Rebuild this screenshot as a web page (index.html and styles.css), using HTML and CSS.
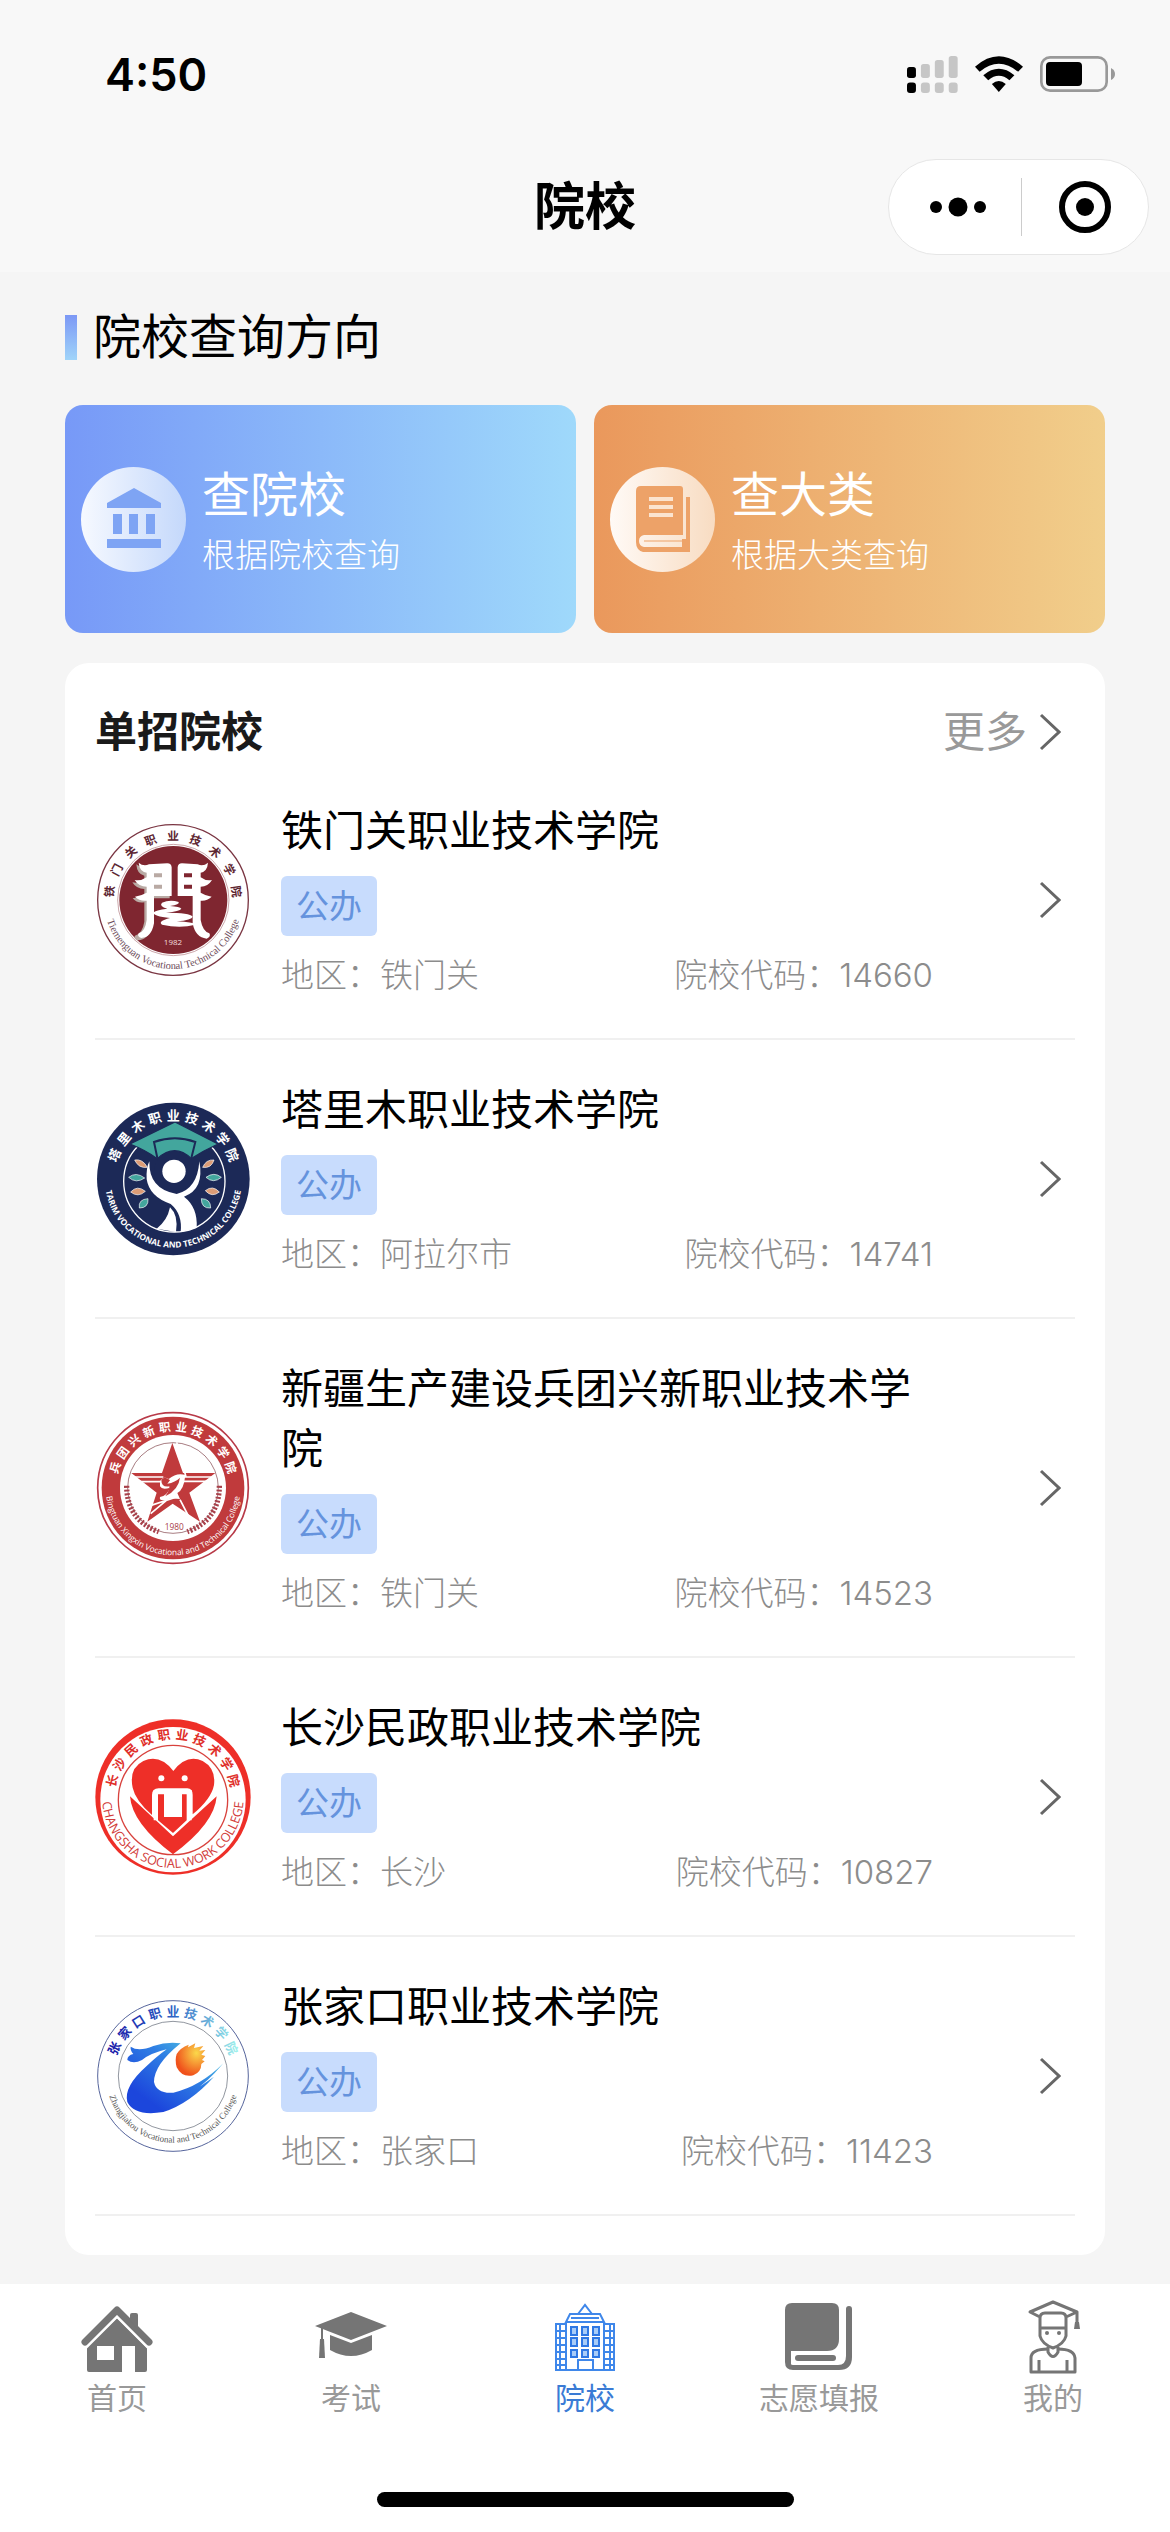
FILE: index.html
```html
<!DOCTYPE html>
<html lang="zh-CN">
	<head>
		<meta charset="utf-8">
		<meta name="viewport" content="width=device-width, initial-scale=1">
		<title>院校</title>
		<link rel="stylesheet" href="styles.css">
	</head>
	<body>
		<header class="header">
			<div class="status">
				<span class="time">4:50</span>
				<div class="status-icons">
					<svg width="51" height="37" viewBox="81 78 154 111">
						<g fill="#c6c6c6">
							<rect x="123" y="102" width="27" height="42" rx="8"/>
							<rect x="165" y="90" width="27" height="54" rx="8"/>
							<rect x="207" y="78" width="27" height="66" rx="8"/>
							<rect x="123" y="158" width="27" height="31" rx="9"/>
							<rect x="165" y="158" width="27" height="31" rx="9"/>
							<rect x="207" y="158" width="27" height="31" rx="9"/>
						</g>
						<rect x="81" y="111" width="27" height="33" rx="8"/>
						<rect x="81" y="158" width="27" height="31" rx="9"/>
					</svg>
					<svg width="48" height="36" viewBox="285 75 145 108">
						<path d="M285 107Q357 44 430 107L415 122Q357 74 299 122Z"/>
						<path d="M310 133Q357 94 404 133L389 148Q357 121 325 148Z"/>
						<path d="M336 159Q357 142 378 159L357 183Z"/>
					</svg>
					<svg width="75" height="36" viewBox="480 78 225 108">
						<rect x="484" y="82" width="196" height="100" rx="26" fill="none" stroke="#999" stroke-width="8"/>
						<rect x="498" y="96" width="108" height="72" rx="12"/>
						<path d="M693 114Q705 120 705 132T693 150Z" fill="#999"/>
					</svg>
				</div>
			</div>
			<div class="nav">
				<h1 class="nav-title">院校</h1>
				<div class="capsule">
					<button class="capsule-btn" type="button" aria-label="更多操作">
						<svg width="56" height="20" viewBox="0 0 56 20">
							<circle cx="6" cy="10" r="6"/>
							<circle cx="28" cy="10" r="9.5"/>
							<circle cx="50" cy="10" r="6"/>
						</svg>
					</button>
					<button class="capsule-btn" type="button" aria-label="关闭">
						<svg width="52" height="52" viewBox="0 0 52 52">
							<circle cx="26" cy="26" r="23" fill="none" stroke="#000" stroke-width="6"/>
							<circle cx="26" cy="26" r="9"/>
						</svg>
					</button>
				</div>
			</div>
		</header>

		<main class="main">
			<h2 class="heading">院校查询方向</h2>
			<div class="entries">
				<a class="entry entry-school" href="#">
					<span class="entry-icon">
						<svg width="54" height="62" viewBox="0 0 54 62">
							<path fill="#7ea4f4" d="M27 0L54 15V20H0V15ZM6 26H15V46H6ZM22 26H31V46H22ZM39 26H48V46H39ZM0 51H54V60H0Z"/>
						</svg>
					</span>
					<span class="entry-text">
						<span class="entry-name">查院校</span>
						<span class="entry-desc">根据院校查询</span>
					</span>
				</a>
				<a class="entry entry-major" href="#">
					<span class="entry-icon">
						<svg width="54" height="68" viewBox="0 0 54 68">
							<path fill="#eda268" d="M5 1H44Q47 1 47 4V50H8Q3 51 3 56T8 62H46V54H50V12H54V67H7Q0 65 0 57V6Q0 1 5 1Z"/>
							<path stroke="#fbe4d0" stroke-width="4" d="M13 14H37M13 22H37M13 30H37"/>
							<path stroke="#eda268" stroke-width="1" d="M8 56H46"/>
						</svg>
					</span>
					<span class="entry-text">
						<span class="entry-name">查大类</span>
						<span class="entry-desc">根据大类查询</span>
					</span>
				</a>
			</div>

			<section class="panel">
				<div class="panel-head">
					<h2 class="panel-title">单招院校</h2>
					<a class="more" href="#">更多
						<svg class="arrow" width="22" height="38" viewBox="0 0 22 38"><path d="M2 2L20 19L2 36"/></svg>
					</a>
				</div>
				<ul class="schools">
					<li>
						<a class="school" href="#">
							<svg class="logo" viewBox="45 66 468 468">
								<path id="a1" fill="none" d="M279 479A179 179 0 0 1 279 121A179 179 0 0 1 279 479"/>
								<path id="a2" fill="none" d="M279 93A207 207 0 0 0 279 507A207 207 0 0 0 279 93"/>
								<circle cx="279" cy="300" r="226" fill="#fff" stroke="#7a3542" stroke-width="4"/>
								<circle cx="280" cy="300" r="167" fill="none" stroke="#b07a80" stroke-width="2"/>
								<circle cx="280" cy="300" r="162" fill="#7f2630"/>
								<text class="brush" font-size="35" fill="#5d2632"><textPath href="#a1" startOffset="50%">铁&ensp;&emsp13;门&ensp;&emsp13;关&ensp;&emsp13;职&ensp;&emsp13;业&ensp;&emsp13;技&ensp;&emsp13;术&ensp;&emsp13;学&ensp;&emsp13;院</textPath></text>
								<text class="serif" font-size="31" fill="#6c4a58"><textPath href="#a2" startOffset="50%">Tiemenguan Vocational Technical College</textPath></text>
								<g fill="#b9aaa4" transform="translate(-5 5)">
									<path d="M174 188Q190 202 207 195L262 190Q272 190 274 200V290H220V370Q212 415 178 416Q164 410 170 402Q192 396 198 360V302Q176 306 163 290Q180 290 198 280V262Q174 262 162 242Q180 246 198 236V222Q176 218 174 188Z"/>
								</g>
								<path fill="#fff" fill-rule="evenodd" d="M176 188Q190 200 207 193L262 190Q274 190 275 202V288H222V370Q214 413 184 414Q170 410 176 400Q196 394 200 360V302Q178 304 165 290Q182 288 200 278V260Q176 260 164 240Q182 244 200 232V218Q178 214 176 188ZM222 220V232H246V220ZM222 254V266H246V254Z"/>
								<path fill="#fff" fill-rule="evenodd" d="M384 188Q370 200 353 193L306 190Q294 190 293 202V288H338V370Q346 413 380 416Q394 410 388 400Q368 394 362 360V302Q380 304 395 290Q378 288 362 278V260Q384 260 396 240Q378 244 362 232V218Q382 214 384 188ZM312 220V232H336V220ZM312 254V266H336V254Z"/>
								<path fill="#fff" d="M246 308Q270 298 296 306Q300 314 270 318Q300 320 304 326Q300 334 258 338Q330 338 338 350Q336 360 290 364Q340 366 346 374Q300 386 246 374Q232 364 270 354Q220 348 220 338Q226 330 262 326Q236 318 246 308Z"/>
								<text class="sans" x="279" y="436" font-size="24" fill="#f3dede">1982</text>
							</svg>
							<div class="info">
								<h3 class="name">铁门关职业技术学院</h3>
								<span class="tag">公办</span>
								<div class="meta"><span>地区：铁门关</span><span>院校代码：14660</span></div>
							</div>
							<svg class="arrow" width="22" height="38" viewBox="0 0 22 38"><path d="M2 2L20 19L2 36"/></svg>
						</a>
					</li>
					<li>
						<a class="school" href="#">
							<svg class="logo" viewBox="45 65 468 468">
								<path id="b1" fill="none" d="M280 475A176 176 0 0 1 280 123A176 176 0 0 1 280 475"/>
								<path id="b2" fill="none" d="M280 93A206 206 0 0 0 280 505A206 206 0 0 0 280 93"/>
								<circle cx="280" cy="299" r="229" fill="#1c2957"/>
								<circle cx="283" cy="306" r="152" fill="none" stroke="#fff" stroke-width="4"/>
								<path fill="#43a69d" stroke="#1c2957" stroke-width="4" d="M285 128L414 194Q370 214 334 238Q285 190 232 238Q196 212 150 194Z"/>
								<path fill="none" stroke="#1c2957" stroke-width="6" d="M232 236L222 188Q285 166 346 188L334 236"/>
								<circle cx="282" cy="276" r="60" fill="#1c2957"/>
								<circle cx="282" cy="276" r="35" fill="#fff"/>
								<path fill="#fff" d="M208 246Q206 330 290 344Q352 330 358 246Q374 330 312 352Q354 384 350 446L302 458Q308 404 272 374Q208 352 200 300Q198 266 208 246Z"/>
								<path fill="#fff" d="M270 384Q296 408 288 458L230 448Q262 424 270 384Z"/>
								<g fill="#dc9c76" stroke="#fff" stroke-width="2">
									<path d="M164 242Q188 238 202 264Q176 268 164 242Z"/>
									<path d="M152 338Q172 316 196 336Q174 356 152 338Z"/>
									<path d="M368 264Q378 240 402 242Q394 268 368 264Z"/>
									<path d="M376 334Q398 316 418 338Q396 356 376 334Z"/>
								</g>
								<g fill="#43a69d" stroke="#fff" stroke-width="2">
									<path d="M146 294Q168 276 194 296Q168 314 146 294Z"/>
									<path d="M178 386Q174 360 204 358Q206 386 178 386Z"/>
									<path d="M378 294Q402 276 424 294Q400 314 378 294Z"/>
									<path d="M364 358Q392 358 392 386Q364 388 364 358Z"/>
								</g>
								<text class="brush" font-size="39" fill="#fff"><textPath href="#b1" startOffset="50%">塔&emsp13;里&emsp13;木&emsp13;职&emsp13;业&emsp13;技&emsp13;术&emsp13;学&emsp13;院</textPath></text>
								<text class="sans" font-size="25" font-weight="700" fill="#fff"><textPath href="#b2" startOffset="50%">TARIM VOCATIONAL AND TECHNICAL COLLEGE</textPath></text>
							</svg>
							<div class="info">
								<h3 class="name">塔里木职业技术学院</h3>
								<span class="tag">公办</span>
								<div class="meta"><span>地区：阿拉尔市</span><span>院校代码：14741</span></div>
							</div>
							<svg class="arrow" width="22" height="38" viewBox="0 0 22 38"><path d="M2 2L20 19L2 36"/></svg>
						</a>
					</li>
					<li>
						<a class="school" href="#">
							<svg class="logo" viewBox="45 61 468 468">
								<path id="c1" fill="none" d="M279 466A171 171 0 0 1 279 124A171 171 0 0 1 279 466"/>
								<path id="c2" fill="none" d="M279 93A202 202 0 0 0 279 497A202 202 0 0 0 279 93"/>
								<circle cx="279" cy="295" r="226" fill="#fff" stroke="#b83a48" stroke-width="5"/>
								<circle cx="279" cy="295" r="214" fill="#c03a3c"/>
								<circle cx="279" cy="295" r="159" fill="#fff"/>
								<circle cx="279" cy="295" r="136" fill="none" stroke="#7c3b42" stroke-width="2"/>
								<path fill="#c03a3c" d="M277 160L309 250H406L328 309L360 396L278 342L202 396L230 309L154 250H246Z"/>
								<path stroke="#fff" stroke-width="5" fill="none" d="M290 158L318 262M300 262H400M302 275H380M156 262H250M176 276H250M212 372L262 330M204 350L290 322M300 330L330 388"/>
								<path fill="#fff" d="M240 275Q250 258 266 268Q290 248 316 256Q312 300 292 310L300 328Q272 324 262 330Q236 336 240 322Q262 318 270 294Q246 302 240 290Z"/>
								<path fill="#c03a3c" d="M244 270Q256 258 270 272L262 282Q286 278 300 264Q296 300 256 320Q270 300 268 290Q244 294 244 270Z"/>
								<g fill="none" stroke="#a8404a" stroke-width="16" stroke-dasharray="6 5">
									<path d="M140 288Q140 390 236 426"/>
									<path d="M418 288Q418 390 322 426"/>
								</g>
								<text class="sans" x="283" y="422" font-size="25" fill="#a8404a">1980</text>
								<text class="brush" font-size="35" fill="#fff"><textPath href="#c1" startOffset="50%">兵&emsp13;团&emsp13;兴&emsp13;新&emsp13;职&emsp13;业&emsp13;技&emsp13;术&emsp13;学&emsp13;院</textPath></text>
								<text class="sans" font-size="25" fill="#fff"><textPath href="#c2" startOffset="50%">Bingtuan Xingxin Vocational and Technical College</textPath></text>
							</svg>
							<div class="info">
								<h3 class="name">新疆生产建设兵团兴新职业技术学院</h3>
								<span class="tag">公办</span>
								<div class="meta"><span>地区：铁门关</span><span>院校代码：14523</span></div>
							</div>
							<svg class="arrow" width="22" height="38" viewBox="0 0 22 38"><path d="M2 2L20 19L2 36"/></svg>
						</a>
					</li>
					<li>
						<a class="school" href="#">
							<svg class="logo" viewBox="45 56 468 468">
								<path id="d1" fill="none" d="M279 466A175 175 0 0 1 279 116A175 175 0 0 1 279 466"/>
								<path id="d2" fill="none" d="M279 79A212 212 0 0 0 279 503A212 212 0 0 0 279 79"/>
								<circle cx="279" cy="290" r="233" fill="#ee2f28"/>
								<circle cx="279" cy="298" r="218" fill="#fff"/>
								<circle cx="279" cy="299" r="164" fill="none" stroke="#d8423d" stroke-width="4"/>
								<path fill="#ee2f28" d="M280 212Q240 160 190 182Q146 204 158 262Q166 300 216 344V284Q216 264 236 264H322Q338 264 338 284V342Q394 296 402 254Q408 204 368 182Q320 160 280 212Z"/>
								<path fill="#ee2f28" d="M150 288L279 408L410 288Q404 370 279 462Q156 370 150 288Z"/>
								<path fill="#ee2f28" d="M234 282H252V350H306V282H320V360L279 398L234 360Z"/>
								<path fill="none" stroke="#fff" stroke-width="10" d="M226 360V274H262V340H298V274H330V360"/>
								<circle cx="244" cy="234" r="9" fill="#fff"/>
								<circle cx="314" cy="234" r="9" fill="#fff"/>
								<text class="brush" font-size="38" fill="#e02f2a"><textPath href="#d1" startOffset="50%">长&emsp13;沙&emsp13;民&emsp13;政&emsp13;职&emsp13;业&emsp13;技&emsp13;术&emsp13;学&emsp13;院</textPath></text>
								<text class="sans" font-size="38" fill="#d23c3a"><textPath href="#d2" startOffset="50%">CHANGSHA SOCIAL WORK COLLEGE</textPath></text>
							</svg>
							<div class="info">
								<h3 class="name">长沙民政职业技术学院</h3>
								<span class="tag">公办</span>
								<div class="meta"><span>地区：长沙</span><span>院校代码：10827</span></div>
							</div>
							<svg class="arrow" width="22" height="38" viewBox="0 0 22 38"><path d="M2 2L20 19L2 36"/></svg>
						</a>
					</li>
					<li>
						<a class="school" href="#">
							<svg class="logo" viewBox="45 54 468 468">
								<defs>
									<linearGradient id="blue" x1="0" y1="1" x2="1" y2="0">
										<stop offset="0.2" stop-color="#1c46dc"/>
										<stop offset="0.6" stop-color="#2f7fe4"/>
										<stop offset="1" stop-color="#5ce0e0"/>
									</linearGradient>
									<linearGradient id="ring" gradientUnits="userSpaceOnUse" x1="90" y1="0" x2="470" y2="0">
										<stop offset="0" stop-color="#1a1aa8"/>
										<stop offset="0.5" stop-color="#2b62c4"/>
										<stop offset="1" stop-color="#9ef0ec"/>
									</linearGradient>
									<radialGradient id="sun" cx="0.7" cy="0.3" r="0.7">
										<stop offset="0" stop-color="#fbd84a"/>
										<stop offset="1" stop-color="#f0521c"/>
									</radialGradient>
								</defs>
								<path id="e1" fill="none" d="M279 468A180 180 0 0 1 279 108A180 180 0 0 1 279 468"/>
								<path id="e2" fill="none" d="M279 88A200 200 0 0 0 279 488A200 200 0 0 0 279 88"/>
								<circle cx="279" cy="288" r="226" fill="#fff" stroke="#56659c" stroke-width="3"/>
								<circle cx="279" cy="288" r="164" fill="none" stroke="#59606e" stroke-width="2"/>
								<path fill="url(#blue)" d="M152 200Q176 216 220 198Q262 184 302 190Q222 254 222 306Q230 342 280 338Q360 320 430 250Q380 310 336 336L402 290Q330 370 250 396Q164 410 142 366Q130 320 200 258Q232 228 260 208Q210 220 186 240Q160 254 142 240Q142 226 160 222Q150 210 152 200Z"/>
								<path fill="url(#sun)" d="M290 222Q300 204 326 194L324 202L346 190L342 204L370 198L358 212L376 210L364 224L376 228L366 240L374 244L364 252Q364 276 340 286Q306 294 290 262Q284 240 290 222Z"/>
								<text class="brush" font-size="38" fill="url(#ring)"><textPath href="#e1" startOffset="50%">张&emsp13;家&emsp13;口&emsp13;职&emsp13;业&emsp13;技&emsp13;术&emsp13;学&emsp13;院</textPath></text>
								<text class="serif" font-size="27" fill="#555"><textPath href="#e2" startOffset="50%">Zhangjiakou Vocational and Technical College</textPath></text>
							</svg>
							<div class="info">
								<h3 class="name">张家口职业技术学院</h3>
								<span class="tag">公办</span>
								<div class="meta"><span>地区：张家口</span><span>院校代码：11423</span></div>
							</div>
							<svg class="arrow" width="22" height="38" viewBox="0 0 22 38"><path d="M2 2L20 19L2 36"/></svg>
						</a>
					</li>
				</ul>
			</section>
		</main>

		<footer class="footer">
			<nav class="tabs">
				<a class="tab" href="#">
					<svg width="74" height="74" viewBox="0 0 74 74">
						<path fill="none" stroke="#757575" stroke-width="7" stroke-linecap="round" stroke-linejoin="round" d="M5 42L37 10L69 42"/>
						<path fill="#757575" d="M50 20V15Q50 13 52 13H56Q58 13 58 15V30Z"/>
						<path fill="#757575" fill-rule="evenodd" d="M37 18L67 48V70Q67 72 65 72H55V46H42V72H9Q7 72 7 70V47ZM17 46V60H34V46Z"/>
						<path fill="none" stroke="#fff" stroke-width="2" d="M6 48L37 17L68 48"/>
					</svg>
					<span>首页</span>
				</a>
				<a class="tab" href="#">
					<svg width="74" height="74" viewBox="0 0 74 74">
						<path fill="#757575" d="M37 12L73 26L37 40L1 26ZM16 35L37 43L58 35V50Q37 62 16 50Z"/>
						<path fill="none" stroke="#757575" stroke-width="2" d="M8 28V42"/>
						<path fill="#757575" d="M6 39H10L11 58H5Z"/>
					</svg>
					<span>考试</span>
				</a>
				<a class="tab tab-active" href="#">
					<svg width="74" height="74" viewBox="0 0 74 74">
						<g fill="none" stroke="#3f87ea" stroke-width="2">
							<path d="M7 70H67M30 14L37 5L44 14M22 14H52L56 22H18ZM23 18H51M18 22V70M56 22V70M8 70V24H18M56 24H66V70M30 70V60H45V70"/>
							<path d="M9 31H17M9 38H17M9 45H17M9 52H17M9 59H17M9 65H17M57 31H65M57 38H65M57 45H65M57 52H65M57 59H65M57 65H65M12 24V70M62 24V70"/>
						</g>
						<g fill="#a8ccf8" stroke="#2f78e4" stroke-width="2">
							<path d="M23 27H29V35H23ZM34 27H40V35H34ZM45 27H51V35H45ZM23 38H29V46H23ZM34 38H40V46H34ZM45 38H51V46H45ZM23 50H29V57H23ZM34 50H40V57H34ZM45 50H51V57H45Z"/>
						</g>
					</svg>
					<span>院校</span>
				</a>
				<a class="tab" href="#">
					<svg width="74" height="74" viewBox="0 0 74 74">
						<path fill="#757575" d="M10 3H50Q57 3 57 10V39Q57 51 45 51H9V64Q9 65 11 65H56Q64 65 64 56V9Q64 6 67 6T70 9V57Q70 70 57 70H11Q3 70 3 62V10Q3 3 10 3Z"/>
						<path stroke="#757575" stroke-width="6" stroke-linecap="round" d="M16 58H51"/>
					</svg>
					<span>志愿填报</span>
				</a>
				<a class="tab" href="#">
					<svg width="74" height="74" viewBox="0 0 74 74">
						<g fill="none" stroke="#757575" stroke-width="3" stroke-linejoin="round">
							<path d="M24 17L14 12L37 2L61 12L50 17M24 28V18Q24 13 29 13H45Q50 13 50 18V28ZM24 28V36Q26 44 37 48Q48 44 50 36V28M61 12V27M32 47V52Q37 61 42 52V47"/>
							<path d="M32 49Q15 49 15 58V72H59V58Q58 49 42 49M23 60V72M51 60V72"/>
						</g>
						<path fill="#757575" d="M59 22H63L64 29H58Z"/>
						<circle cx="31" cy="33" r="2" fill="#757575"/>
						<circle cx="43" cy="33" r="2" fill="#757575"/>
					</svg>
					<span>我的</span>
				</a>
			</nav>
			<div class="home-bar"></div>
		</footer>
	</body>
</html>
```
FILE: styles.css
```css
* {
	box-sizing: border-box;
}
body {
	margin: 0;
	min-height: 100vh;
	display: flex;
	flex-direction: column;
	background-color: #f5f5f5;
	color: #000;
	font-family: Inter, "Noto Sans CJK SC", sans-serif;
}
h1, h2, h3, ul {
	margin: 0;
	padding: 0;
	font-weight: 400;
}
ul {
	list-style: none;
}
a {
	color: inherit;
	text-decoration: none;
}
svg {
	display: block;
	flex: none;
}

/* status bar and title */
.header {
	background-color: #f8f8f8;
	padding-bottom: 6px;
}
.status {
	height: 148px;
	padding: 0 55px 0 105px;
	display: flex;
	align-items: center;
	justify-content: space-between;
}
.time {
	font-size: 45px;
	font-weight: 600;
}
.status-icons {
	display: flex;
	gap: 17px;
}
.nav {
	height: 118px;
	padding: 0 21px;
	display: grid;
	grid-template-columns: 1fr auto 1fr;
	align-items: center;
}
.nav-title {
	grid-column: 2;
	font-size: 51px;
	font-weight: 600;
	line-height: 60px;
}
.capsule {
	justify-self: end;
	width: 261px;
	height: 96px;
	display: flex;
	align-items: center;
	background-color: #fff;
	border: 1px solid #e6e6e6;
	border-radius: 48px;
}
.capsule-btn {
	flex: 1;
	height: 58px;
	padding: 0 0 0 6px;
	display: flex;
	align-items: center;
	justify-content: center;
	background: none;
	border: 0;
}
.capsule-btn + .capsule-btn {
	padding: 0;
	border-left: 1px solid #ccc;
}

/* query entries */
.main {
	padding: 32px 65px 29px;
}
.heading {
	display: flex;
	align-items: center;
	gap: 16px;
	font-size: 48px;
	line-height: 66px;
}
.heading::before {
	content: "";
	width: 12px;
	height: 45px;
	background: linear-gradient(#7c98f5, #a0d4f9);
}
.entries {
	display: grid;
	grid-template-columns: 1fr 1fr;
	gap: 18px;
	margin: 35px 0 30px;
}
.entry {
	height: 228px;
	padding: 0 16px;
	display: flex;
	align-items: center;
	gap: 16px;
	border-radius: 18px;
	color: #fff;
}
.entry-school {
	background: linear-gradient(to right, #7799f7, #9fd9fb);
}
.entry-major {
	background: linear-gradient(to right, #ea985c, #f1ce8b);
}
.entry-icon {
	width: 105px;
	height: 105px;
	display: flex;
	align-items: center;
	justify-content: center;
	border-radius: 50%;
}
.entry-school .entry-icon {
	background: linear-gradient(to right, #f6f9ff, #c4d8fb);
}
.entry-major .entry-icon {
	background: linear-gradient(to right, #fffaf6, #f8dcc2);
}
.entry-text {
	display: flex;
	flex-direction: column;
	padding-top: 6px;
}
.entry-name {
	font-size: 48px;
	line-height: 66px;
}
.entry-desc {
	font-size: 33px;
	font-weight: 300;
	line-height: 54px;
}

/* school list */
.panel {
	padding: 0 30px 39px;
	background-color: #fff;
	border-radius: 24px;
}
.panel-head {
	height: 98px;
	padding: 39px 14px 0 0;
	display: flex;
	align-items: center;
	justify-content: space-between;
	line-height: 60px;
}
.panel-title {
	font-size: 42px;
	font-weight: 700;
	color: #1a1a1a;
}
.more {
	display: flex;
	align-items: center;
	gap: 12px;
	font-size: 42px;
	color: #999;
}
.arrow path {
	fill: none;
	stroke: #666;
	stroke-width: 3;
}
.school {
	padding: 40px 14px 39px 0;
	display: flex;
	align-items: center;
	border-bottom: 2px solid #f0f0f0;
}
.logo {
	width: 156px;
	height: 156px;
	margin-right: 30px;
}
.logo text {
	text-anchor: middle;
}
.brush {
	font-family: "Noto Sans CJK SC", sans-serif;
	font-weight: 700;
}
.serif {
	font-family: "Liberation Serif", serif;
}
.sans {
	font-family: "Open Sans", sans-serif;
}
.info {
	flex: 1;
	margin-right: 106px;
}
.name {
	font-size: 42px;
	line-height: 60px;
}
.tag {
	display: block;
	width: 96px;
	margin: 15px 0;
	border-radius: 6px;
	background-color: #c8dcfd;
	color: #6593dd;
	font-size: 33px;
	line-height: 60px;
	text-align: center;
}
.meta {
	display: flex;
	justify-content: space-between;
	font-size: 33px;
	font-weight: 300;
	line-height: 48px;
	color: #8c8c8c;
}

/* tab bar */
.footer {
	margin-top: auto;
	padding: 16px 0 25px;
	background-color: #fff;
}
.tabs {
	display: grid;
	grid-template-columns: repeat(5, 1fr);
}
.tab {
	display: flex;
	flex-direction: column;
	align-items: center;
	gap: 2px;
	font-size: 30px;
	line-height: 44px;
	color: #999;
}
.tab-active {
	color: #3a7bd5;
}
.home-bar {
	width: 417px;
	height: 15px;
	margin: 72px auto 0;
	border-radius: 8px;
	background-color: #000;
}
```
